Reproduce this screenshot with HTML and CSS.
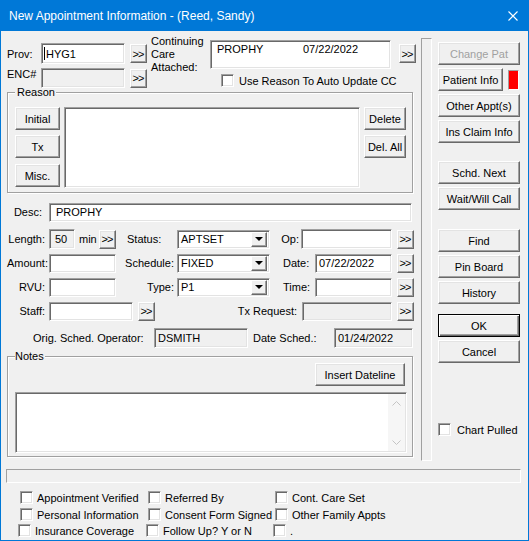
FILE: index.html
```html
<!DOCTYPE html>
<html lang="en">
<head>
    <meta charset="UTF-8">
    <title>New Appointment Information - (Reed, Sandy)</title>
    <link rel="stylesheet" href="styles.css">
</head>
<body>
<div class="window">
    <div class="titlebar">
        <span class="title">New Appointment Information - (Reed, Sandy)</span>
        <svg class="close" width="10" height="10" viewBox="0 0 10 10"><path d="M0.5 0.5L9.5 9.5M9.5 0.5L0.5 9.5" stroke="#fff" stroke-width="1.1" fill="none"/></svg>
    </div>

    <div class="client">
        <div class="top">
            <div class="main">
                <!-- provider / continuing care -->
                <div class="head">
                    <div class="prov-col">
                        <div class="row">
                            <span class="lbl-prov">Prov:</span>
                            <div class="field w-prov caret">HYG1</div>
                            <button class="btn btn-more">&gt;&gt;</button>
                        </div>
                        <div class="row">
                            <span class="lbl-prov enc-lbl">ENC#</span>
                            <div class="field disabled w-prov enc"></div>
                            <button class="btn btn-more">&gt;&gt;</button>
                        </div>
                    </div>
                    <div class="cc-label">Continuing<br>Care<br>Attached:</div>
                    <div class="cc-col">
                        <div class="row cc-row">
                            <div class="field cc-box"><span class="cc-reason">PROPHY</span><span>07/22/2022</span></div>
                            <button class="btn btn-more cc-btn">&gt;&gt;</button>
                        </div>
                        <div class="check cc-check"><span class="box"></span>Use Reason To Auto Update CC</div>
                    </div>
                </div>

                <fieldset class="group reason">
                    <legend>Reason</legend>
                    <div class="reason-body">
                        <div class="btn-col left-btns">
                            <button class="btn">Initial</button>
                            <button class="btn">Tx</button>
                            <button class="btn">Misc.</button>
                        </div>
                        <div class="field listbox"></div>
                        <div class="btn-col del-btns">
                            <button class="btn">Delete</button>
                            <button class="btn">Del. All</button>
                        </div>
                    </div>
                </fieldset>

                <!-- appointment fields -->
                <div class="frow desc-row">
                    <span class="lbl-f desc-lbl">Desc:</span>
                    <div class="field desc-in">PROPHY</div>
                </div>
                <div class="frow first">
                    <span class="lbl-f">Length:</span>
                    <div class="field disabled len-in">50</div>
                    <span class="min">min</span>
                    <button class="btn btn-more">&gt;&gt;</button>
                    <span class="status-lbl">Status:</span>
                    <div class="field select"><span class="sel-text">APTSET</span><span class="dd"></span></div>
                    <span class="op-lbl">Op:</span>
                    <div class="field op-in"></div>
                    <button class="btn btn-more">&gt;&gt;</button>
                </div>
                <div class="frow">
                    <span class="lbl-f">Amount:</span>
                    <div class="field short-in"></div>
                    <span class="mid-lbl">Schedule:</span>
                    <div class="field select"><span class="sel-text">FIXED</span><span class="dd"></span></div>
                    <span class="right-lbl">Date:</span>
                    <div class="field date-in">07/22/2022</div>
                    <button class="btn btn-more">&gt;&gt;</button>
                </div>
                <div class="frow">
                    <span class="lbl-f">RVU:</span>
                    <div class="field short-in"></div>
                    <span class="mid-lbl">Type:</span>
                    <div class="field select"><span class="sel-text">P1</span><span class="dd"></span></div>
                    <span class="right-lbl">Time:</span>
                    <div class="field date-in"></div>
                    <button class="btn btn-more">&gt;&gt;</button>
                </div>
                <div class="frow">
                    <span class="lbl-f">Staff:</span>
                    <div class="field staff-in"></div>
                    <button class="btn btn-more">&gt;&gt;</button>
                    <span class="tx-lbl">Tx Request:</span>
                    <div class="field disabled tx-in"></div>
                    <button class="btn btn-more">&gt;&gt;</button>
                </div>
                <div class="frow orig-row">
                    <span class="orig-lbl">Orig. Sched. Operator:</span>
                    <div class="field disabled orig-in">DSMITH</div>
                    <span class="sched-lbl">Date Sched.:</span>
                    <div class="field disabled sched-in">01/24/2022</div>
                </div>

                <fieldset class="group notes">
                    <legend>Notes</legend>
                    <button class="btn dateline-btn">Insert Dateline</button>
                    <div class="field notes-text">
                        <div class="vscroll">
                            <svg width="9" height="5" viewBox="0 0 9 5"><polyline points="0.5,4.5 4.5,0.5 8.5,4.5" fill="none" stroke="#c4c4c4"/></svg>
                            <svg width="9" height="5" viewBox="0 0 9 5"><polyline points="0.5,0.5 4.5,4.5 8.5,0.5" fill="none" stroke="#c4c4c4"/></svg>
                        </div>
                    </div>
                </fieldset>
            </div>

            <div class="separator"></div>

            <div class="side">
                <button class="btn disabled-btn">Change Pat</button>
                <div class="row">
                    <button class="btn patient-btn">Patient Info</button>
                    <span class="flag"></span>
                </div>
                <button class="btn">Other Appt(s)</button>
                <button class="btn">Ins Claim Info</button>
                <button class="btn gap-a">Schd. Next</button>
                <button class="btn">Wait/Will Call</button>
                <button class="btn gap-b">Find</button>
                <button class="btn">Pin Board</button>
                <button class="btn">History</button>
                <button class="btn btn-default gap-c">OK</button>
                <button class="btn">Cancel</button>
                <div class="check chart-check"><span class="box"></span>Chart Pulled</div>
            </div>
        </div>

        <div class="statusbar"></div>

        <div class="checks">
            <div class="crow">
                <div class="check c1"><span class="box"></span>Appointment Verified</div>
                <div class="check c2"><span class="box"></span>Referred By</div>
                <div class="check"><span class="box"></span>Cont. Care Set</div>
            </div>
            <div class="crow r2">
                <div class="check c1"><span class="box"></span>Personal Information</div>
                <div class="check c2"><span class="box"></span>Consent Form Signed</div>
                <div class="check"><span class="box"></span>Other Family Appts</div>
            </div>
            <div class="crow r3">
                <div class="check c1"><span class="box"></span>Insurance Coverage</div>
                <div class="check c2"><span class="box"></span>Follow Up? Y or N</div>
                <div class="check"><span class="box"></span>.</div>
            </div>
        </div>
    </div>
</div>
</body>
</html>
```

FILE: styles.css
```css
/* Base */
* {
    margin: 0;
    padding: 0;
    box-sizing: border-box;
}

body {
    background-color: #f0f0f0;
    font-family: 'Liberation Sans', Arial, sans-serif;
    font-size: 11px;
    color: #000;
}

.window {
    width: 529px;
    height: 541px;
    border: 1px solid #0078d7;
    border-top: none;
    background-color: #f0f0f0;
    display: flex;
    flex-direction: column;
}

/* Title bar */
.titlebar {
    height: 31px;
    flex: none;
    background-color: #0078d7;
    color: #fff;
    display: flex;
    align-items: center;
    justify-content: space-between;
    padding: 0 10px 0 8px;
    font-size: 12px;
}

.client {
    flex: 1;
    display: flex;
    flex-direction: column;
}

.row {
    display: flex;
    align-items: center;
}

/* Controls */
.field {
    background-color: #fff;
    border: 1px solid;
    border-color: #a0a0a0 #fff #fff #a0a0a0;
    box-shadow: inset 1px 1px #696969, inset -1px -1px #e3e3e3;
    display: flex;
    align-items: center;
    padding-left: 3px;
    white-space: nowrap;
}

.field.disabled {
    background-color: #f0f0f0;
}

.btn {
    font: inherit;
    color: #000;
    background-color: #f0f0f0;
    border: 1px solid;
    border-color: #fff #696969 #696969 #fff;
    box-shadow: inset -1px -1px #a0a0a0, inset 1px 1px #e3e3e3;
    display: flex;
    align-items: center;
    justify-content: center;
    height: 23px;
    white-space: nowrap;
}

.btn-more {
    width: 17px;
    height: 19px;
    margin-left: 5px;
    letter-spacing: -1px;
    padding-right: 1px;
    flex: none;
}

.btn-default {
    border-color: #000;
    box-shadow: inset 1px 1px #fff, inset -1px -1px #696969, inset -2px -2px #a0a0a0;
}

.disabled-btn {
    color: #a0a0a0;
}

.check {
    display: flex;
    align-items: center;
    gap: 4px;
    height: 13px;
    white-space: nowrap;
}

.box {
    width: 13px;
    height: 13px;
    flex: none;
    background-color: #fff;
    border: 1px solid;
    border-color: #a0a0a0 #fff #fff #a0a0a0;
    box-shadow: inset 1px 1px #696969, inset -1px -1px #e3e3e3;
}

.group {
    border: 1px solid #a0a0a0;
    box-shadow: inset 1px 1px #fff, 1px 1px #fff;
    width: 406px;
    min-width: 0;
}

.group legend {
    line-height: 13px;
    background-color: #f0f0f0;
    padding: 0 1px 0 2px;
}

/* Layout */
.top {
    display: flex;
    align-items: flex-start;
    padding: 4px 0 0 6px;
}

.main {
    width: 411px;
    flex: none;
}

.head {
    display: flex;
    align-items: flex-start;
    height: 51px;
}

.prov-col {
    width: 140px;
    padding-top: 8px;
    display: flex;
    flex-direction: column;
    gap: 4px;
}

.lbl-prov {
    width: 34px;
}

.enc-lbl {
    align-self: flex-start;
    line-height: 13px;
}

.w-prov {
    width: 84px;
    height: 21px;
    padding-left: 2px;
}

.w-prov.enc {
    height: 20px;
}

.caret::before {
    content: '';
    width: 1px;
    height: 13px;
    background-color: #000;
    margin-right: 1px;
}

.cc-label {
    margin-left: 4px;
    width: 55px;
    line-height: 13px;
}

.cc-col {
    margin-left: 4px;
    padding-top: 5px;
}

.cc-row {
    align-items: flex-start;
}

.cc-box {
    width: 181px;
    height: 29px;
    align-items: flex-start;
    padding: 2px 0 0 6px;
    line-height: 13px;
}

.cc-reason {
    width: 86px;
}

.cc-btn {
    margin-left: 8px;
    margin-top: 4px;
}

.cc-check {
    margin: 5px 0 0 11px;
    gap: 5px;
}

/* Reason group */
.reason {
    padding: 8px 6px 4px 7px;
}

.reason-body {
    display: flex;
    height: 81px;
}

.btn-col {
    display: flex;
    flex-direction: column;
    gap: 5px;
}

.left-btns {
    width: 45px;
}

.left-btns .btn:last-child {
    margin-top: 1px;
}

.listbox {
    margin-left: 4px;
    width: 296px;
    height: 81px;
}

.del-btns {
    margin-left: 4px;
    width: 42px;
}

/* Field rows */
.frow {
    display: flex;
    align-items: center;
    height: 20px;
    margin-top: 4px;
}

.desc-row {
    margin-top: 9px;
}

.frow.first {
    margin-top: 7px;
}

.lbl-f {
    width: 38px;
    margin-right: 4px;
    text-align: right;
}

.desc-lbl {
    padding-right: 3px;
}

.desc-in {
    width: 363px;
    height: 19px;
    padding-left: 6px;
}

.len-in {
    width: 26px;
    height: 20px;
    padding-left: 5px;
}

.min {
    width: 16px;
    margin-left: 4px;
}

.frow .btn-more {
    margin-left: 4px;
}

.status-lbl {
    width: 50px;
    margin-left: 11px;
}

.select {
    width: 93px;
    height: 19px;
    justify-content: space-between;
    padding-right: 2px;
}

.dd {
    width: 16px;
    height: 15px;
    background-color: #f0f0f0;
    border: 1px solid;
    border-color: #fff #696969 #696969 #fff;
    box-shadow: inset -1px -1px #a0a0a0;
    display: flex;
    align-items: center;
    justify-content: center;
}

.dd::after {
    content: '';
    border-left: 4px solid transparent;
    border-right: 4px solid transparent;
    border-top: 4px solid #000;
}

.op-lbl {
    width: 31px;
    padding-right: 2px;
    text-align: right;
}

.op-in {
    width: 91px;
    height: 20px;
}

.frow .op-in + .btn-more,
.frow .date-in + .btn-more,
.frow .tx-in + .btn-more,
.frow .staff-in + .btn-more {
    margin-left: 5px;
}

.short-in {
    width: 67px;
    height: 19px;
}

.mid-lbl {
    width: 61px;
    padding-right: 3px;
    text-align: right;
}

.right-lbl {
    width: 45px;
    padding-left: 13px;
}

.date-in {
    width: 77px;
    height: 19px;
}

.staff-in {
    width: 84px;
    height: 19px;
}

.tx-lbl {
    width: 147px;
    padding-right: 5px;
    text-align: right;
}

.tx-in {
    width: 90px;
    height: 19px;
}

.orig-row {
    margin-top: 7px;
}

.orig-lbl {
    width: 147px;
    padding-left: 26px;
}

.orig-in {
    width: 94px;
    height: 20px;
}

.sched-lbl {
    width: 86px;
    padding-left: 5px;
}

.sched-in {
    width: 79px;
    height: 20px;
}

/* Notes group */
.notes {
    margin-top: 2px;
    padding: 0 5px 3px 7px;
    display: flex;
    flex-direction: column;
}

.notes legend {
    padding: 0 1px 0 0;
}

.dateline-btn {
    align-self: flex-end;
    width: 90px;
    margin-right: 2px;
}

.notes-text {
    margin-top: 6px;
    height: 61px;
    justify-content: flex-end;
    padding: 1px;
}

.vscroll {
    width: 17px;
    height: 100%;
    background-color: #f6f6f6;
    display: flex;
    flex-direction: column;
    align-items: center;
    justify-content: space-between;
    padding: 7px 0 6px;
}

/* Separator + side buttons */
.separator {
    width: 11px;
    height: 423px;
    margin: 3px 0 0 3px;
    border: 1px solid;
    border-color: #a0a0a0 #fff #fff #a0a0a0;
    flex: none;
}

.side {
    width: 82px;
    margin: 7px 0 0 6px;
    display: flex;
    flex-direction: column;
    gap: 3px;
}

.patient-btn {
    width: 65px;
}

.flag {
    width: 11px;
    height: 20px;
    margin-left: 5px;
    background-color: #f00;
    border: 1px solid;
    border-color: #a0a0a0 #fff #fff #a0a0a0;
}

.gap-a {
    margin-top: 15px;
}

.gap-b {
    margin-top: 16px;
}

.gap-c {
    margin-top: 7px;
}

.chart-check {
    margin-top: 57px;
    gap: 6px;
}

/* Bottom strip */
.statusbar {
    width: 515px;
    height: 14px;
    margin: 8px 0 0 5px;
    border: 1px solid;
    border-color: #a0a0a0 #fff #fff #a0a0a0;
}

.checks {
    margin-top: 8px;
    padding-left: 19px;
}

.crow {
    display: flex;
}

.crow.r2 {
    margin-top: 4px;
}

.crow.r3 {
    margin-top: 3px;
    margin-left: -2px;
}

.c1 {
    width: 128px;
}

.c2 {
    width: 127px;
}
```
